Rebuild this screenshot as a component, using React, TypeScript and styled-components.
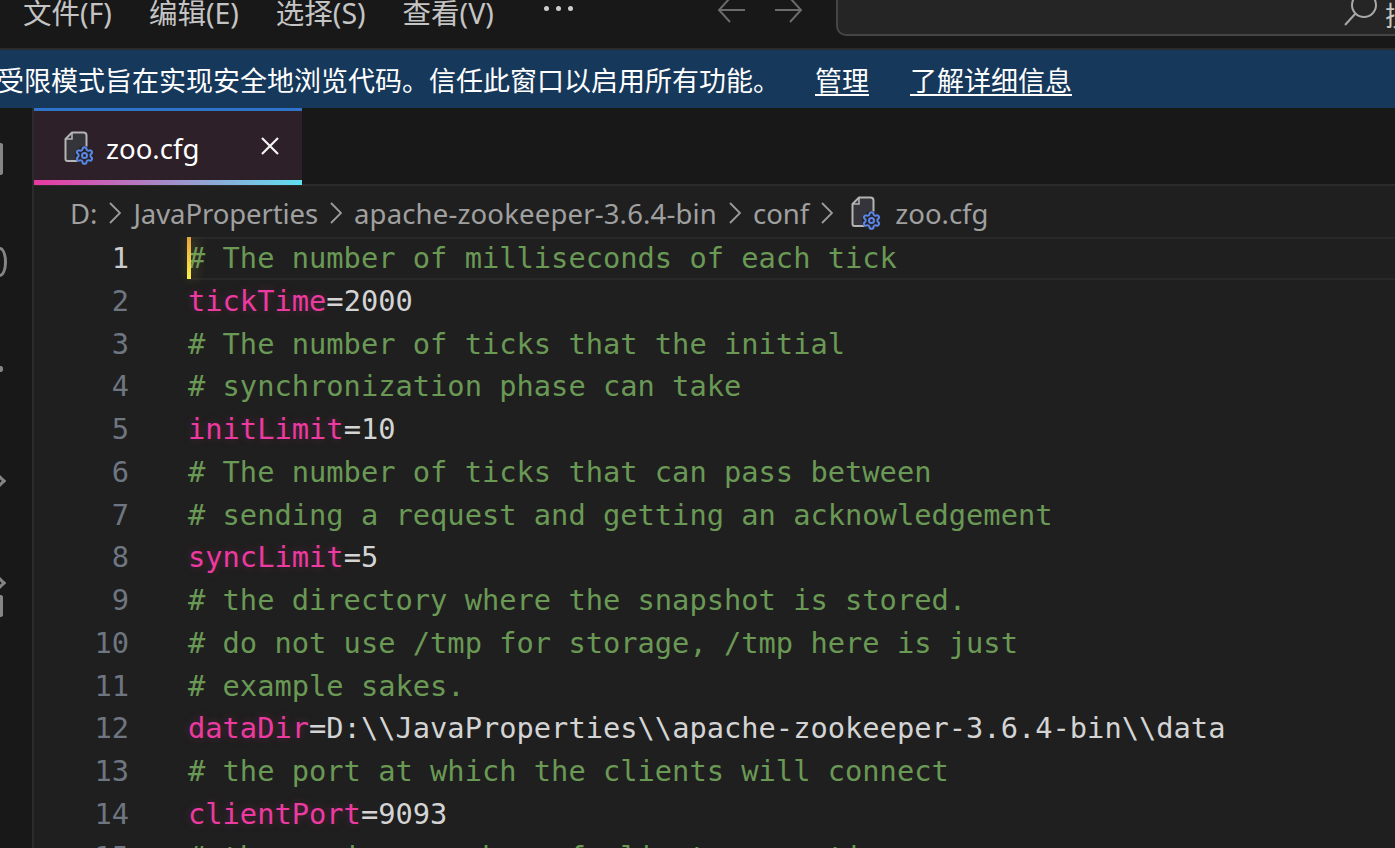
import React from 'react';
import styled, { createGlobalStyle } from 'styled-components';
import { Settings } from 'lucide-react';

const UI_FONT = '"Noto Sans", "Noto Sans CJK SC", sans-serif';

type Line = { comment?: string; key?: string; value?: string };

const LINES: Line[] = [
  { comment: '# The number of milliseconds of each tick' },
  { key: 'tickTime', value: '2000' },
  { comment: '# The number of ticks that the initial' },
  { comment: '# synchronization phase can take' },
  { key: 'initLimit', value: '10' },
  { comment: '# The number of ticks that can pass between' },
  { comment: '# sending a request and getting an acknowledgement' },
  { key: 'syncLimit', value: '5' },
  { comment: '# the directory where the snapshot is stored.' },
  { comment: '# do not use /tmp for storage, /tmp here is just' },
  { comment: '# example sakes.' },
  { key: 'dataDir', value: 'D:\\\\JavaProperties\\\\apache-zookeeper-3.6.4-bin\\\\data' },
  { comment: '# the port at which the clients will connect' },
  { key: 'clientPort', value: '9093' },
  { comment: '# the maximum number of client connections.' },
];

const CRUMBS = [
  { label: 'D:', tracking: 0 },
  { label: 'JavaProperties', tracking: -0.1 },
  { label: 'apache-zookeeper-3.6.4-bin', tracking: 0.17 },
  { label: 'conf', tracking: 0 },
];
const MENUS = ['文件(F)', '编辑(E)', '选择(S)', '查看(V)'];

const FileGearIcon: React.FC = () => (
  <svg width="30" height="34" viewBox="0 0 30 34" fill="none">
    <path
      d="M8 1.5h11.5a3 3 0 0 1 3 3V28a2 2 0 0 1-2 2H3.5a2 2 0 0 1-2-2V8z"
      fill="#34343a"
      stroke="#b4b4b4"
      strokeWidth="2"
      strokeLinejoin="round"
    />
    <path d="M8 1.5V8H1.5" stroke="#b4b4b4" strokeWidth="1.6" />
    <circle cx="20.5" cy="24.5" r="9.5" fill="#26242a" />
    <Settings x={10.5} y={14.5} width={20} height={20} color="#5a86e6" strokeWidth={2.4} />
  </svg>
);

const Chevron: React.FC = () => (
  <CrumbChevron width="12" height="22" viewBox="0 0 12 22" fill="none">
    <polyline points="1,1 11,11 1,21" stroke="#9a9a9a" strokeWidth="1.9" />
  </CrumbChevron>
);

const NavArrow: React.FC<{ flip?: boolean }> = ({ flip }) => (
  <NavIcon $flip={flip} width="29" height="26" viewBox="0 0 29 26" fill="none">
    <path d="M28 13H2M13 1 2 13l11 12" stroke="#6b6b6b" strokeWidth="2" />
  </NavIcon>
);

export default function App() {
  return (
    <Page>
      <GlobalStyle />
      <TitleBar>
        <Menus>
          {MENUS.map((m) => (
            <MenuItem key={m}>{m}</MenuItem>
          ))}
          <MoreDots>
            <i />
            <i />
            <i />
          </MoreDots>
        </Menus>
        <NavArrows>
          <NavArrow />
          <NavArrow flip />
        </NavArrows>
        <SearchBox>
          <SearchGlyph width="34" height="36" viewBox="0 0 34 36" fill="none">
            <circle cx="20" cy="15" r="12" stroke="#a8a8a8" strokeWidth="2" />
            <path d="M11.5 23.5 1 35" stroke="#a8a8a8" strokeWidth="2" />
          </SearchGlyph>
          <SearchHint>搜索</SearchHint>
        </SearchBox>
      </TitleBar>

      <Banner>
        <BannerText>受限模式旨在实现安全地浏览代码。信任此窗口以启用所有功能。</BannerText>
        <BannerLink>管理</BannerLink>
        <BannerLink>了解详细信息</BannerLink>
      </Banner>

      <Workspace>
        <Rail>
          <RailMark $top={35} $w={3} $h={32} />
          <RailArc />
          <RailMark $top={89} $w={2} $h={6} />
          <RailChevron $top={104} />
          <RailChevron $top={92} />
          <RailMark $top={7} $w={3} $h={22} />
        </Rail>

        <Main>
          <TabStrip>
            <Tab>
              <TabTop />
              <TabBody>
                <FileGearIcon />
                <TabLabel>zoo.cfg</TabLabel>
                <TabClose width="20" height="20" viewBox="0 0 20 20" fill="none">
                  <path d="M2 2l16 16M18 2 2 18" stroke="#f4f4f4" strokeWidth="2.2" />
                </TabClose>
              </TabBody>
              <TabBottom />
            </Tab>
          </TabStrip>

          <Breadcrumbs>
            {CRUMBS.map((c) => (
              <React.Fragment key={c.label}>
                <Crumb $tracking={c.tracking}>{c.label}</Crumb>
                <Chevron />
              </React.Fragment>
            ))}
            <CrumbIcon>
              <FileGearIcon />
            </CrumbIcon>
            <Crumb $tracking={0}>zoo.cfg</Crumb>
          </Breadcrumbs>

          <Editor>
            {LINES.map((line, i) => (
              <Row key={i}>
                <LineNo $active={i === 0}>{i + 1}</LineNo>
                <Code $active={i === 0}>
                  {i === 0 && <Caret />}
                  {line.comment && <Comment>{line.comment}</Comment>}
                  {line.key && (
                    <>
                      <Key>{line.key}</Key>
                      <Value>={line.value}</Value>
                    </>
                  )}
                </Code>
              </Row>
            ))}
          </Editor>
        </Main>
      </Workspace>
    </Page>
  );
}

const GlobalStyle = createGlobalStyle`
  html, body {
    margin: 0;
    padding: 0;
    background: #1f1f1f;
    overflow: hidden;
  }
`;

const Page = styled.div`
  width: 1395px;
  height: 848px;
  display: flex;
  flex-direction: column;
  overflow: hidden;
  font-family: ${UI_FONT};
`;

const TitleBar = styled.header`
  height: 48px;
  flex-shrink: 0;
  display: flex;
  align-items: flex-start;
  background: #181818;
  border-bottom: 2px solid #2b2b2b;
`;

const Menus = styled.nav`
  display: flex;
  align-items: center;
  gap: 37px;
  width: 690px;
  padding-left: 23px;
  box-sizing: border-box;
  height: 23px;
`;

const MenuItem = styled.span`
  font-size: 28.5px;
  color: #c4c4c4;
  white-space: nowrap;
`;

const MoreDots = styled.span`
  display: flex;
  gap: 7px;
  margin-left: 13px;
  margin-top: -7px;

  i {
    width: 5px;
    height: 5px;
    border-radius: 50%;
    background: #cccccc;
  }
`;

const NavArrows = styled.div`
  display: flex;
  gap: 28px;
  margin-left: 27px;
  margin-top: -3px;
`;

const NavIcon = styled.svg<{ $flip?: boolean }>`
  display: block;
  transform: ${({ $flip }) => ($flip ? 'scaleX(-1)' : 'none')};
`;

const SearchBox = styled.div`
  flex: 1;
  height: 44px;
  margin-top: -12px;
  margin-left: 33px;
  margin-right: -40px;
  display: flex;
  align-items: flex-start;
  justify-content: flex-end;
  gap: 7px;
  background: #252525;
  border: 2px solid #454545;
  border-radius: 10px;
  overflow: hidden;
`;

const SearchGlyph = styled.svg`
  display: block;
  flex-shrink: 0;
`;

const SearchHint = styled.span`
  width: 48px;
  margin-top: 8px;
  font-size: 27px;
  line-height: 36px;
  color: #c4c4c4;
  white-space: nowrap;
  overflow: hidden;
`;

const Banner = styled.div`
  height: 58px;
  flex-shrink: 0;
  display: flex;
  align-items: center;
  margin-left: -3px;
  background: #16385b;
`;

const BannerText = styled.span`
  margin-right: 35px;
  font-size: 27px;
  color: #ffffff;
  white-space: nowrap;
`;

const BannerLink = styled.span`
  margin-right: 41px;
  font-size: 27px;
  color: #ffffff;
  text-decoration: underline;
  text-underline-offset: 3px;
  white-space: nowrap;
`;

const Workspace = styled.div`
  flex: 1;
  min-height: 0;
  display: flex;
`;

const Rail = styled.aside`
  width: 32px;
  flex-shrink: 0;
  display: flex;
  flex-direction: column;
  background: #181818;
  border-right: 2px solid #2b2b2b;
  overflow: hidden;
`;

const RailMark = styled.span<{ $top: number; $w: number; $h: number }>`
  display: block;
  width: ${({ $w }) => $w}px;
  height: ${({ $h }) => $h}px;
  margin-top: ${({ $top }) => $top}px;
  box-sizing: border-box;
  border: 3px solid #858585;
  border-left: none;
  border-radius: 0 4px 4px 0;
`;

const RailArc = styled.span`
  display: block;
  width: 7px;
  height: 30px;
  margin-top: 72px;
  box-sizing: border-box;
  border: 3px solid #858585;
  border-left: none;
  border-radius: 0 100% 100% 0 / 0 50% 50% 0;
`;

const RailChevron = styled.span<{ $top: number }>`
  display: block;
  width: 10px;
  height: 10px;
  margin-top: ${({ $top }) => $top}px;
  margin-left: -6px;
  box-sizing: border-box;
  border-top: 3px solid #858585;
  border-right: 3px solid #858585;
  transform: rotate(45deg);
`;

const Main = styled.main`
  flex: 1;
  min-width: 0;
  display: flex;
  flex-direction: column;
`;

const TabStrip = styled.div`
  height: 78px;
  flex-shrink: 0;
  display: flex;
  background: #181818;
  box-shadow: inset 0 -2px 0 #2b2b2b;
`;

const Tab = styled.div`
  width: 268px;
  height: 77px;
  display: flex;
  flex-direction: column;
  background: #2d2029;
`;

const TabTop = styled.div`
  height: 3px;
  flex-shrink: 0;
  background: #2f74c9;
`;

const TabBody = styled.div`
  flex: 1;
  display: flex;
  align-items: center;
  padding: 5px 22px 0 30px;
`;

const TabBottom = styled.div`
  height: 5px;
  flex-shrink: 0;
  background: linear-gradient(90deg, #ea38a2, #5fe0f0);
`;

const TabLabel = styled.span`
  margin-left: 12px;
  font-size: 27.6px;
  color: #ffffff;
`;

const TabClose = styled.svg`
  display: block;
  margin-left: auto;
  margin-top: -4px;
`;

const Breadcrumbs = styled.div`
  height: 51px;
  box-sizing: border-box;
  flex-shrink: 0;
  display: flex;
  align-items: center;
  gap: 12px;
  padding: 3px 0 0 36px;
  background: #1f1f1f;
`;

const Crumb = styled.span<{ $tracking: number }>`
  font-size: 27.5px;
  letter-spacing: ${({ $tracking }) => $tracking}px;
  color: #a0a0a0;
  white-space: nowrap;
`;

const CrumbChevron = styled.svg`
  display: block;
  flex-shrink: 0;
`;

const CrumbIcon = styled.span`
  display: block;
  margin: 0 2px 0 6px;
  height: 34px;
`;

const Editor = styled.section`
  flex: 1;
  min-height: 0;
  overflow: hidden;
  background: #1f1f1f;
  font-family: "DejaVu Sans Mono", monospace;
  font-size: 28.72px;
`;

const Row = styled.div`
  height: 42.75px;
  display: flex;
`;

const LineNo = styled.span<{ $active: boolean }>`
  width: 95px;
  flex-shrink: 0;
  text-align: right;
  line-height: 42.75px;
  color: ${({ $active }) => ($active ? '#cccccc' : '#6e7681')};
`;

const Code = styled.div<{ $active: boolean }>`
  flex: 1;
  margin-left: 59px;
  box-sizing: border-box;
  position: relative;
  line-height: ${({ $active }) => ($active ? '38.75px' : '42.75px')};
  white-space: pre;
  border-top: ${({ $active }) => ($active ? '2px solid #282828' : 'none')};
  border-bottom: ${({ $active }) => ($active ? '2px solid #282828' : 'none')};
`;

const Caret = styled.span`
  position: absolute;
  left: -1px;
  top: -2px;
  width: 4px;
  height: 42px;
  background: linear-gradient(180deg, #e8a33d, #fdf04a);
  box-shadow: 3px 0 12px rgba(240, 220, 90, 0.35);
`;

const Comment = styled.span`
  color: #6a9955;
`;

const Key = styled.span`
  color: #ec3aa0;
  text-shadow: 0 0 10px rgba(236, 58, 160, 0.25);
`;

const Value = styled.span`
  color: #d4d4d4;
`;
